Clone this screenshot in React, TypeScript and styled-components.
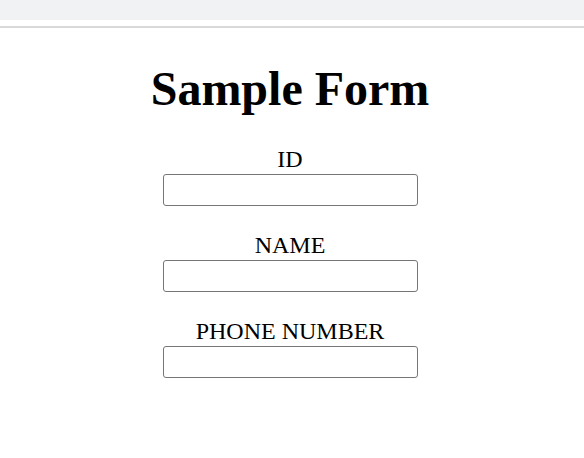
import React from 'react'
import styled, { createGlobalStyle } from 'styled-components'

const GlobalStyle = createGlobalStyle`
    body {
        margin: 0;
        background: #fff;
        font-family: "Liberation Serif", "Times New Roman", serif;
        color: #000;
    }
`

const TopBar = styled.div`
    height: 20px;
    background-color: #f1f2f4;
`

const Divider = styled.div`
    height: 2px;
    margin-top: 6px;
    background-color: #d9d9d9;
`

const Page = styled.main`
    display: flex;
    flex-direction: column;
    align-items: center;
    padding-top: 33px;
    padding-right: 4px;
`

const Title = styled.h1`
    margin: 0 0 27px;
    font-size: 48px;
    line-height: 56px;
    font-weight: bold;
`

const Form = styled.form`
    display: flex;
    flex-direction: column;
    align-items: center;
    gap: 24px;
`

const Field = styled.label`
    display: flex;
    flex-direction: column;
    align-items: center;
`

const FieldLabel = styled.span`
    font-size: 24px;
    line-height: 30px;
`

const FieldInput = styled.input`
    box-sizing: border-box;
    width: 255px;
    height: 32px;
    border: 1px solid #767676;
    border-radius: 3px;
    background: #fff;
    outline: none;
`

const fields = ['ID', 'NAME', 'PHONE NUMBER']

export default function App() {
    return (
        <>
            <GlobalStyle />
            <TopBar />
            <Divider />
            <Page>
                <Title>Sample Form</Title>
                <Form>
                    {fields.map(name => (
                        <Field key={name}>
                            <FieldLabel>{name}</FieldLabel>
                            <FieldInput type="text" />
                        </Field>
                    ))}
                </Form>
            </Page>
        </>
    )
}
